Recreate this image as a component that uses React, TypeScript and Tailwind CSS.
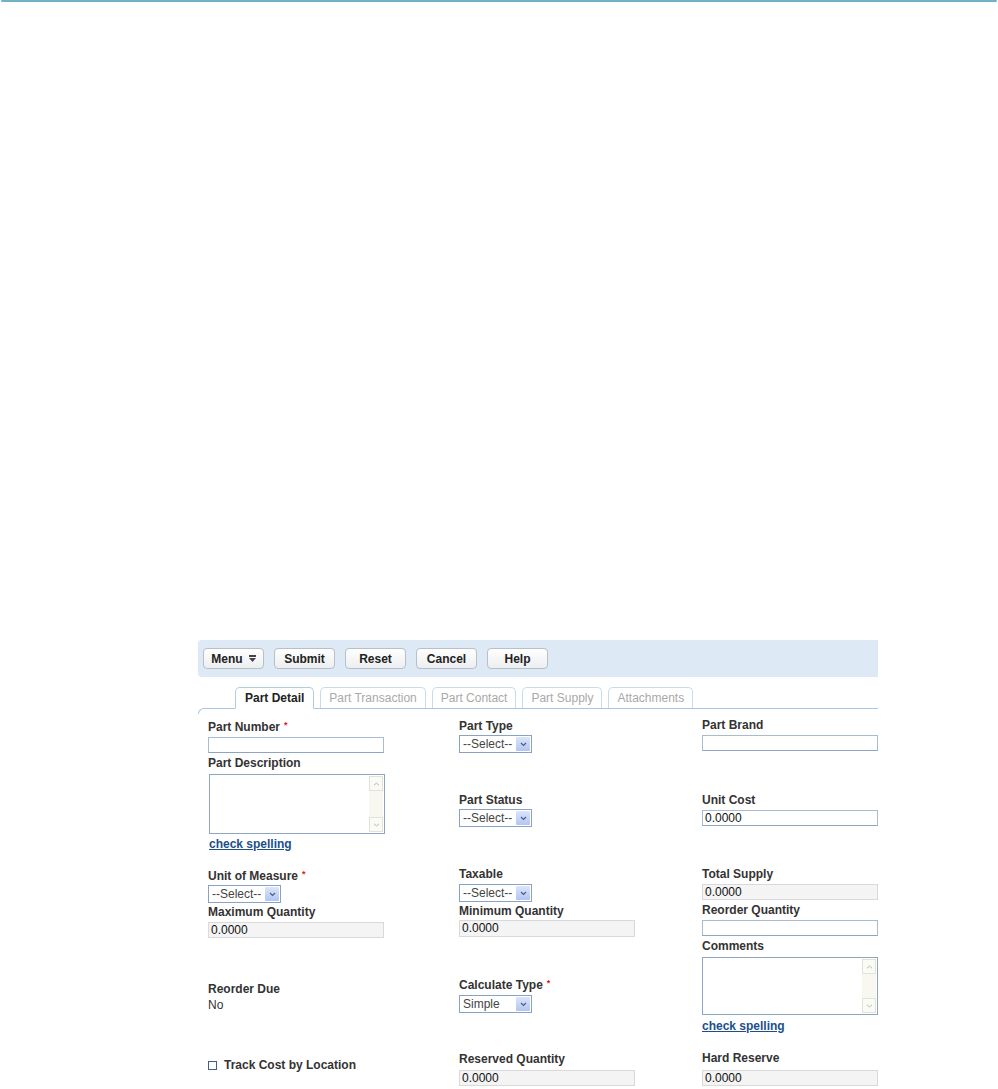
import React from "react";

const Label = ({ text, req, className = "" }: { text: string; req?: boolean; className?: string }) => (
  <div className={`h-[14px] text-[12px] leading-[14px] font-bold text-[#333] whitespace-nowrap ${className}`}>
    {text}
    {req && <span className="ml-[4px] align-top text-[9px] leading-[10px] text-[#e0191f]">*</span>}
  </div>
);

const TextInput = ({ value = "", disabled, className = "" }: { value?: string; disabled?: boolean; className?: string }) => (
  <div
    className={`h-[16px] w-[176px] border px-[2px] text-[12px] leading-[14px] text-[#111] ${
      disabled ? "border-[#d9d9d9] bg-[#f4f4f4]" : "border-[#a9bbcf] border-b-[#8ea5bf] bg-white"
    } ${className}`}
  >
    {value}
  </div>
);

const Select = ({ value = "--Select--", className = "" }: { value?: string; className?: string }) => (
  <div className={`flex h-[18px] w-[73px] items-stretch border border-[#8aa3c0] bg-white p-px ${className}`}>
    <div className="flex-1 pl-[2px] text-[12px] leading-[14px] text-[#444]">{value}</div>
    <div className="flex w-[14px] items-center justify-center rounded-[1px] bg-gradient-to-b from-[#dbe5fb] to-[#b2c5f2]">
      <svg width="7" height="5" viewBox="0 0 7 5">
        <path d="M1 1 L3.5 3.5 L6 1" fill="none" stroke="#4d5d80" strokeWidth="1.2" />
      </svg>
    </div>
  </div>
);

const TextArea = ({ h, className = "" }: { h: string; className?: string }) => (
  <div className={`flex w-[176px] border border-[#8ea5bf] bg-white ${h} ${className}`}>
    <div className="flex-1" />
    <div className="m-px flex w-[14px] flex-col justify-between bg-[#f8f8f1]">
      <div className="flex h-[15px] items-center justify-center border border-[#e2e2da] bg-[#fbfbf6]">
        <svg width="7" height="4" viewBox="0 0 7 4">
          <path d="M1 3.2 L3.5 1 L6 3.2" fill="none" stroke="#b9b9b2" strokeWidth="1" />
        </svg>
      </div>
      <div className="flex h-[15px] items-center justify-center border border-[#e2e2da] bg-[#fbfbf6]">
        <svg width="7" height="4" viewBox="0 0 7 4">
          <path d="M1 0.8 L3.5 3 L6 0.8" fill="none" stroke="#b9b9b2" strokeWidth="1" />
        </svg>
      </div>
    </div>
  </div>
);

const Spell = ({ className = "" }: { className?: string }) => (
  <div className={`h-[14px] text-[12px] leading-[14px] font-bold text-[#1c4f8a] underline ${className}`}>check spelling</div>
);

const Btn = ({ children }: { children: React.ReactNode }) => (
  <button className="flex h-[21px] w-[61px] items-center justify-center gap-[6px] rounded-[4px] border border-[#b9bfc6] bg-gradient-to-b from-white to-[#eceef0] text-[12px] font-bold text-[#222]">
    {children}
  </button>
);

const Tab = ({ text, active }: { text: string; active?: boolean }) => (
  <div
    className={`h-[21px] rounded-t-[5px] border text-[12px] leading-[20px] whitespace-nowrap ${
      active
        ? "-mb-px h-[22px] border-[#b2cce6] border-b-white bg-white px-[9px] font-bold text-[#222]"
        : "border-[#c9dbee] border-b-0 bg-white px-[8px] text-[#a9a9a9]"
    }`}
  >
    {text}
  </div>
);

export default function App() {
  return (
    <div className="min-h-screen bg-white font-['Liberation_Sans',Arial,sans-serif]">
      <div className="mx-px h-[2px] rounded-full bg-[#72b0c6]" />

      <div className="pl-[198px] pt-[638px]">
        <div className="w-[680px]">
          {/* toolbar */}
          <div className="flex h-[37px] items-center gap-[10px] rounded-l-[4px] bg-[#dde9f5] pl-[5px]">
            <Btn>
              Menu
              <svg width="7" height="7" viewBox="0 0 7 7">
                <rect x="0" y="0" width="7" height="2" fill="#444" />
                <path d="M0 3 H7 L3.5 7 Z" fill="#444" />
              </svg>
            </Btn>
            <Btn>Submit</Btn>
            <Btn>Reset</Btn>
            <Btn>Cancel</Btn>
            <Btn>Help</Btn>
          </div>

          {/* tabs */}
          <div className="relative z-10 mt-[10px] flex items-end gap-[6px] pl-[37px]">
            <Tab text="Part Detail" active />
            <Tab text="Part Transaction" />
            <Tab text="Part Contact" />
            <Tab text="Part Supply" />
            <Tab text="Attachments" />
          </div>
          <div className="h-[6px] rounded-tl-[6px] border-l border-t border-[#a9c6e2]" />

          {/* form */}
          <div className="flex">
            <div className="w-[261px] pl-[10px] pt-[6px]">
              <Label text="Part Number" req />
              <TextInput className="mt-[3px]" />
              <Label text="Part Description" className="mt-[3px]" />
              <TextArea h="h-[60px]" className="ml-px mt-[4px]" />
              <Spell className="ml-px mt-[3px]" />
              <Label text="Unit of Measure" req className="mt-[18px]" />
              <Select className="mt-[2px]" />
              <Label text="Maximum Quantity" className="mt-[2px]" />
              <TextInput value="0.0000" disabled className="mt-[3px]" />
              <Label text="Reorder Due" className="mt-[44px]" />
              <div className="mt-[2px] h-[14px] text-[12px] leading-[14px] text-[#333]">No</div>
              <div className="mt-[46px] flex h-[14px] items-center">
                <div className="h-[9px] w-[9px] border border-[#3d5f88] bg-white" />
                <span className="ml-[7px] text-[12px] leading-[14px] font-bold text-[#333]">Track Cost by Location</span>
              </div>
            </div>

            <div className="w-[243px] pt-[5px]">
              <Label text="Part Type" />
              <Select className="mt-[2px]" />
              <Label text="Part Status" className="mt-[40px]" />
              <Select className="mt-[2px]" />
              <Label text="Taxable" className="mt-[40px]" />
              <Select className="mt-[3px]" />
              <Label text="Minimum Quantity" className="mt-[2px]" />
              <TextInput value="0.0000" disabled className="mt-[2px] h-[17px]" />
              <Label text="Calculate Type" req className="mt-[41px]" />
              <Select value="Simple" className="mt-[3px]" />
              <Label text="Reserved Quantity" className="mt-[39px]" />
              <TextInput value="0.0000" disabled className="mt-[4px]" />
            </div>

            <div className="w-[176px] pt-[4px]">
              <Label text="Part Brand" />
              <TextInput className="mt-[3px]" />
              <Label text="Unit Cost" className="mt-[42px]" />
              <TextInput value="0.0000" className="mt-[3px]" />
              <Label text="Total Supply" className="mt-[41px]" />
              <TextInput value="0.0000" disabled className="mt-[3px]" />
              <Label text="Reorder Quantity" className="mt-[3px]" />
              <TextInput className="mt-[3px]" />
              <Label text="Comments" className="mt-[3px]" />
              <TextArea h="h-[58px]" className="mt-[4px]" />
              <Spell className="mt-[4px]" />
              <Label text="Hard Reserve" className="mt-[18px]" />
              <TextInput value="0.0000" disabled className="mt-[5px]" />
            </div>
          </div>
        </div>
      </div>
    </div>
  );
}
